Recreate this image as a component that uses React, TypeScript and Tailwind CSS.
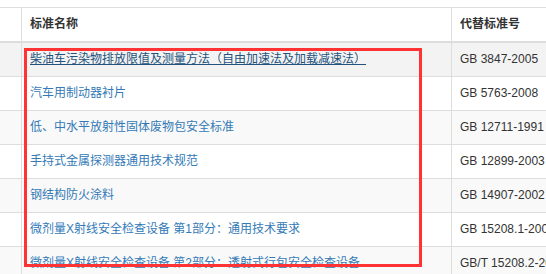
const rows = [
  { name: '柴油车污染物排放限值及测量方法（自由加速法及加载减速法）', code: 'GB 3847-2005' },
  { name: '汽车用制动器衬片', code: 'GB 5763-2008' },
  { name: '低、中水平放射性固体废物包安全标准', code: 'GB 12711-1991' },
  { name: '手持式金属探测器通用技术规范', code: 'GB 12899-2003' },
  { name: '钢结构防火涂料', code: 'GB 14907-2002' },
  { name: '微剂量X射线安全检查设备 第1部分：通用技术要求', code: 'GB 15208.1-2005' },
  { name: '微剂量X射线安全检查设备 第2部分：透射式行包安全检查设备', code: 'GB/T 15208.2-2006' },
];

export default function App() {
  return (
    <div
      className="relative w-[546px] h-[274px] overflow-hidden bg-white pt-[7px] text-[12px] leading-[17px] text-[#333]"
      style={{ fontFamily: '"Liberation Sans", "Noto Sans CJK SC", sans-serif' }}
    >
      <div className="w-[640px]">
        {/* Header */}
        <div className="flex h-[36px] border-t border-b-2 border-[#ddd] bg-white font-bold">
          <div className="w-[21px] shrink-0" />
          <div className="w-[430px] shrink-0 border-l border-[#ddd] pl-2 flex items-center">标准名称</div>
          <div className="flex-1 border-l border-[#ddd] pl-2 flex items-center">代替标准号</div>
        </div>

        {/* Body */}
        {rows.map((row, i) => (
          <div
            key={i}
            className={
              'flex h-[34px] border-b border-[#ddd] ' +
              (i === 0 ? 'bg-[#f3f3f3]' : i % 2 === 0 ? 'bg-[#f9f9f9]' : 'bg-white')
            }
          >
            <div className="w-[21px] shrink-0" />
            <div className="w-[430px] shrink-0 border-l border-[#ddd] pl-2 flex items-center whitespace-nowrap">
              <a
                href="#"
                className={i === 0 ? 'text-[#23527c] underline' : 'text-[#337ab7]'}
              >
                {row.name}
              </a>
            </div>
            <div className="flex-1 border-l border-[#ddd] pl-2 flex items-center whitespace-nowrap">
              {row.code}
            </div>
          </div>
        ))}
      </div>

      {/* Red highlight box */}
      <div className="absolute left-[24px] top-[48px] w-[398px] h-[219px] border-[3px] border-[#f33]" />
    </div>
  );
}
